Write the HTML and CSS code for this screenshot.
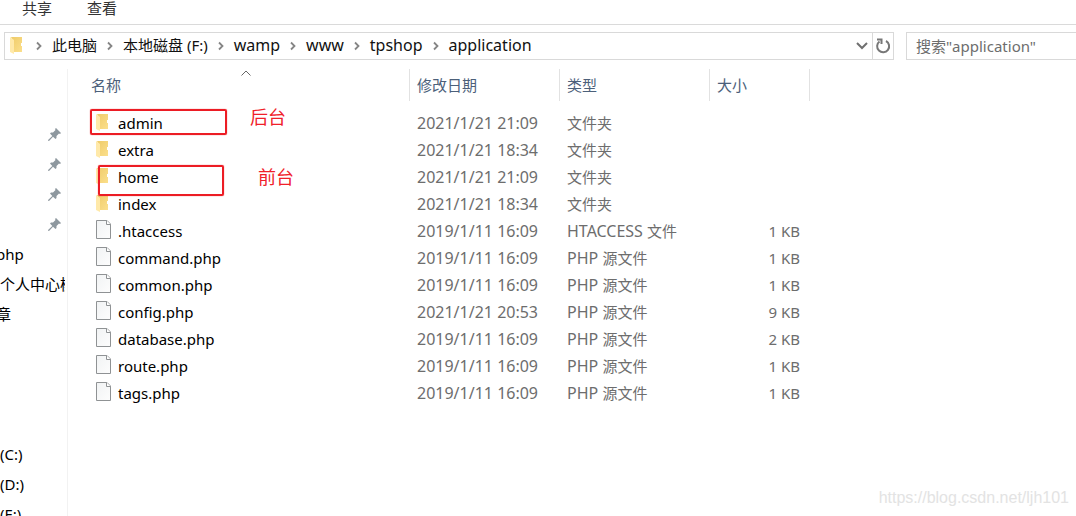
FILE: index.html
```
<!DOCTYPE html>
<html lang="zh-CN">
<head>
<meta charset="utf-8">
<title>application</title>
<link rel="stylesheet" href="styles.css">
</head>
<body>
<svg class="defs" aria-hidden="true">
  <defs>
    <linearGradient id="folder-face" x1="0" y1="0" x2="1" y2="1"><stop offset="0" stop-color="#efcb68"/><stop offset="1" stop-color="#fbdf8c"/></linearGradient>
    <linearGradient id="page-face" x1="0" y1="0" x2="1" y2="1"><stop offset="0" stop-color="#f1f3f4"/><stop offset="1" stop-color="#fdfdfd"/></linearGradient>
    <symbol id="folder" viewBox="0 0 12 18">
      <path d="M1 0H12V6H11V9H12V15H3V4Z" fill="url(#folder-face)"/>
      <path d="M0 0L4 3V17L0 15Z" fill="#ffe9a9"/>
    </symbol>
    <symbol id="file" viewBox="0 0 15 19">
      <path d="M.5 .5H11L14.500 4V18.500H.5Z" fill="url(#page-face)" stroke="#8f9294"/>
      <path d="M10.500 .5V4.500H14.500" fill="#fff" stroke="#8f9294"/>
    </symbol>
    <symbol id="pin" viewBox="0 0 13 13">
      <path d="M8 0L13 5L12 6L11 5.500L8.500 8V10L7.500 11L5 8.700L1.300 12.700L0 13L.3 11.700L4.300 8L2 5.500L3 4.500H5L7.500 2L7 1Z" fill="#8e989f"/>
    </symbol>
    <symbol id="chevron" viewBox="0 0 6 10"><path d="M1 1.500L4.500 5L1 8.500" fill="none" stroke="#858585" stroke-width="1.800"/></symbol>
  </defs>
</svg>

<nav class="tabs" aria-label="功能区"><button>共享</button><button>查看</button></nav>

<div class="toolbar">
  <div class="address">
    <svg class="folder"><use href="#folder"/></svg>
    <nav class="crumbs" aria-label="路径">
      <svg class="chevron"><use href="#chevron"/></svg><a class="cjk" href="#">此电脑</a>
      <svg class="chevron"><use href="#chevron"/></svg><a class="cjk" href="#">本地磁盘 (F:)</a>
      <svg class="chevron"><use href="#chevron"/></svg><a href="#">wamp</a>
      <svg class="chevron"><use href="#chevron"/></svg><a href="#">www</a>
      <svg class="chevron"><use href="#chevron"/></svg><a href="#">tpshop</a>
      <svg class="chevron"><use href="#chevron"/></svg><a href="#">application</a>
    </nav>
    <button class="history" aria-label="历史"><svg width="12" height="8" viewBox="0 0 12 8"><path d="M1 1L6 6L11 1" fill="none" stroke="#707070" stroke-width="2"/></svg></button>
    <button class="refresh" aria-label="刷新"><svg width="16" height="16" viewBox="0 0 16 16"><path d="M11 3A6 6 0 1 1 4.500 3.500" fill="none" stroke="#777" stroke-width="2"/><path d="M2 1.500H6.500V6" fill="none" stroke="#777" stroke-width="2"/></svg></button>
  </div>
  <input class="search" type="text" aria-label="搜索" placeholder="搜索&quot;application&quot;">
</div>

<div class="content">
  <aside class="sidebar">
    <ul class="quick">
      <li><svg class="pin"><use href="#pin"/></svg></li>
      <li><svg class="pin"><use href="#pin"/></svg></li>
      <li><svg class="pin"><use href="#pin"/></svg></li>
      <li><svg class="pin"><use href="#pin"/></svg></li>
      <li><a class="cut" href="#">php</a></li>
      <li><a href="#">个人中心模</a></li>
      <li><a class="cut" href="#">章</a></li>
    </ul>
    <ul class="drives">
      <li><a href="#">(C:)</a></li>
      <li><a href="#">(D:)</a></li>
      <li><a href="#">(E:)</a></li>
    </ul>
  </aside>

  <main class="files">
    <table>
      <thead>
        <tr>
          <th class="name" scope="col"><span>名称</span><svg class="sort" viewBox="0 0 10 6"><path d="M.5 5.500L5 1L9.500 5.500" fill="none" stroke="#666"/></svg></th>
          <th class="date" scope="col"><span>修改日期</span></th>
          <th class="type" scope="col"><span>类型</span></th>
          <th class="size" scope="col"><span>大小</span></th>
        </tr>
      </thead>
      <tbody>
        <tr><td><div class="entry"><svg class="folder"><use href="#folder"/></svg>admin</div></td><td>2021/1/21 21:09</td><td class="cjk">文件夹</td><td></td></tr>
        <tr><td><div class="entry"><svg class="folder"><use href="#folder"/></svg>extra</div></td><td>2021/1/21 18:34</td><td class="cjk">文件夹</td><td></td></tr>
        <tr><td><div class="entry"><svg class="folder"><use href="#folder"/></svg>home</div></td><td>2021/1/21 21:09</td><td class="cjk">文件夹</td><td></td></tr>
        <tr><td><div class="entry"><svg class="folder"><use href="#folder"/></svg>index</div></td><td>2021/1/21 18:34</td><td class="cjk">文件夹</td><td></td></tr>
        <tr><td><div class="entry"><svg class="file"><use href="#file"/></svg>.htaccess</div></td><td>2019/1/11 16:09</td><td>HTACCESS <span class="cjk">文件</span></td><td>1 KB</td></tr>
        <tr><td><div class="entry"><svg class="file"><use href="#file"/></svg>command.php</div></td><td>2019/1/11 16:09</td><td>PHP <span class="cjk">源文件</span></td><td>1 KB</td></tr>
        <tr><td><div class="entry"><svg class="file"><use href="#file"/></svg>common.php</div></td><td>2019/1/11 16:09</td><td>PHP <span class="cjk">源文件</span></td><td>1 KB</td></tr>
        <tr><td><div class="entry"><svg class="file"><use href="#file"/></svg>config.php</div></td><td>2021/1/21 20:53</td><td>PHP <span class="cjk">源文件</span></td><td>9 KB</td></tr>
        <tr><td><div class="entry"><svg class="file"><use href="#file"/></svg>database.php</div></td><td>2019/1/11 16:09</td><td>PHP <span class="cjk">源文件</span></td><td>2 KB</td></tr>
        <tr><td><div class="entry"><svg class="file"><use href="#file"/></svg>route.php</div></td><td>2019/1/11 16:09</td><td>PHP <span class="cjk">源文件</span></td><td>1 KB</td></tr>
        <tr><td><div class="entry"><svg class="file"><use href="#file"/></svg>tags.php</div></td><td>2019/1/11 16:09</td><td>PHP <span class="cjk">源文件</span></td><td>1 KB</td></tr>
      </tbody>
    </table>
    <div class="mark mark-admin"></div><div class="note note-admin">后台</div>
    <div class="mark mark-home"></div><div class="note note-home">前台</div>
  </main>
</div>
<div class="watermark">https://blog.csdn.net/ljh101</div>
</body>
</html>
```
FILE: styles.css
```
* { box-sizing: border-box; }
body {
  display: flex;
  flex-direction: column;
  height: 100vh;
  margin: 0;
  overflow: hidden;
  background: #fff;
  color: #000;
  font: 15px/20px "Noto Sans", "Noto Sans CJK SC", sans-serif;
}
button, input { font: inherit; border: 0; background: none; padding: 0; }
a { color: inherit; text-decoration: none; }
svg { display: block; flex: none; }
ul { list-style: none; margin: 0; padding: 0; }
.defs { position: absolute; width: 0; height: 0; }
.folder { width: 12px; height: 18px; }
.file { width: 15px; height: 19px; }
.pin { width: 13px; height: 13px; }
.chevron { width: 6px; height: 10px; }

.tabs {
  display: flex;
  flex: none;
  align-items: flex-start;
  gap: 35px;
  height: 25px;
  padding-left: 22px;
  border-bottom: 1px solid #dadada;
}
.tabs button { height: 16px; line-height: 16px; color: #333; }

.toolbar { display: flex; flex: none; gap: 12px; padding: 7px 0 0 4px; }
.address { display: flex; flex: 1; align-items: center; height: 28px; border: 1px solid #d9d9d9; padding-left: 5px; }
.crumbs { display: flex; flex: 1; align-items: center; gap: 10px; padding-left: 14px; white-space: nowrap; font-size: 16px; color: #111; }
.crumbs a { padding-bottom: 2px; }
.history { display: grid; place-items: center; width: 20px; height: 26px; }
.refresh { display: grid; place-items: center; width: 21px; height: 26px; border-left: 1px solid #d9d9d9; }
.search { width: 170px; height: 28px; border: 1px solid #d9d9d9; border-right: 0; padding-left: 9px; }
.search::placeholder { color: #6d6d6d; opacity: 1; }

.content { display: flex; flex: 1; min-height: 0; padding-top: 9px; }
.sidebar { width: 68px; flex: none; padding: 50px 2px 0 0; overflow: hidden; border-right: 1px solid #f2f2f2; white-space: nowrap; }
.sidebar li { display: flex; align-items: center; height: 30px; overflow: hidden; }
.sidebar .pin { margin-left: 48px; }
.cut { margin-left: -4px; }
.drives { margin-top: 110px; }

.files { position: relative; flex: 1; padding-left: 15px; }
table { width: 727px; table-layout: fixed; border-spacing: 0; color: #6d6d6d; }
th { position: relative; padding: 0 0 8px; font-weight: 400; text-align: left; color: #4c607a; }
th span { display: flex; align-items: center; height: 32px; padding-left: 7px; border-right: 1px solid #e2e2e2; }
.name { width: 327px; }
.name span { padding-left: 8px; }
.date, .type { width: 150px; }
.size { width: 100px; }
.sort { position: absolute; top: 1px; left: 158px; width: 10px; height: 6px; }
td { height: 27px; padding: 0 0 0 7px; white-space: nowrap; font-size: 16px; }
td:last-child { padding-right: 10px; text-align: right; font-size: 15px; }
.entry { display: grid; grid-template-columns: 22px 1fr; align-items: center; padding-left: 6px; font-size: 15px; color: #000; }
.entry .file { margin-bottom: 3px; }
.crumbs .cjk, td.cjk, td .cjk { font-size: 15px; }

.mark { position: absolute; border: 2px solid #ec1c24; border-radius: 2px; box-shadow: 0 0 1px #ec1c24; }
.mark-admin { top: 40px; left: 22px; width: 137px; height: 26px; }
.mark-home { top: 96px; left: 30px; width: 126px; height: 31px; }
.note { position: absolute; font-size: 18px; color: #f0202a; }
.note-admin { top: 38px; left: 182px; }
.note-home { top: 98px; left: 190px; }
.watermark {
  position: absolute;
  right: 7px;
  bottom: 8px;
  font: 16px/20px "Liberation Sans", Arial, sans-serif;
  color: #e3e3e3;
}
```
